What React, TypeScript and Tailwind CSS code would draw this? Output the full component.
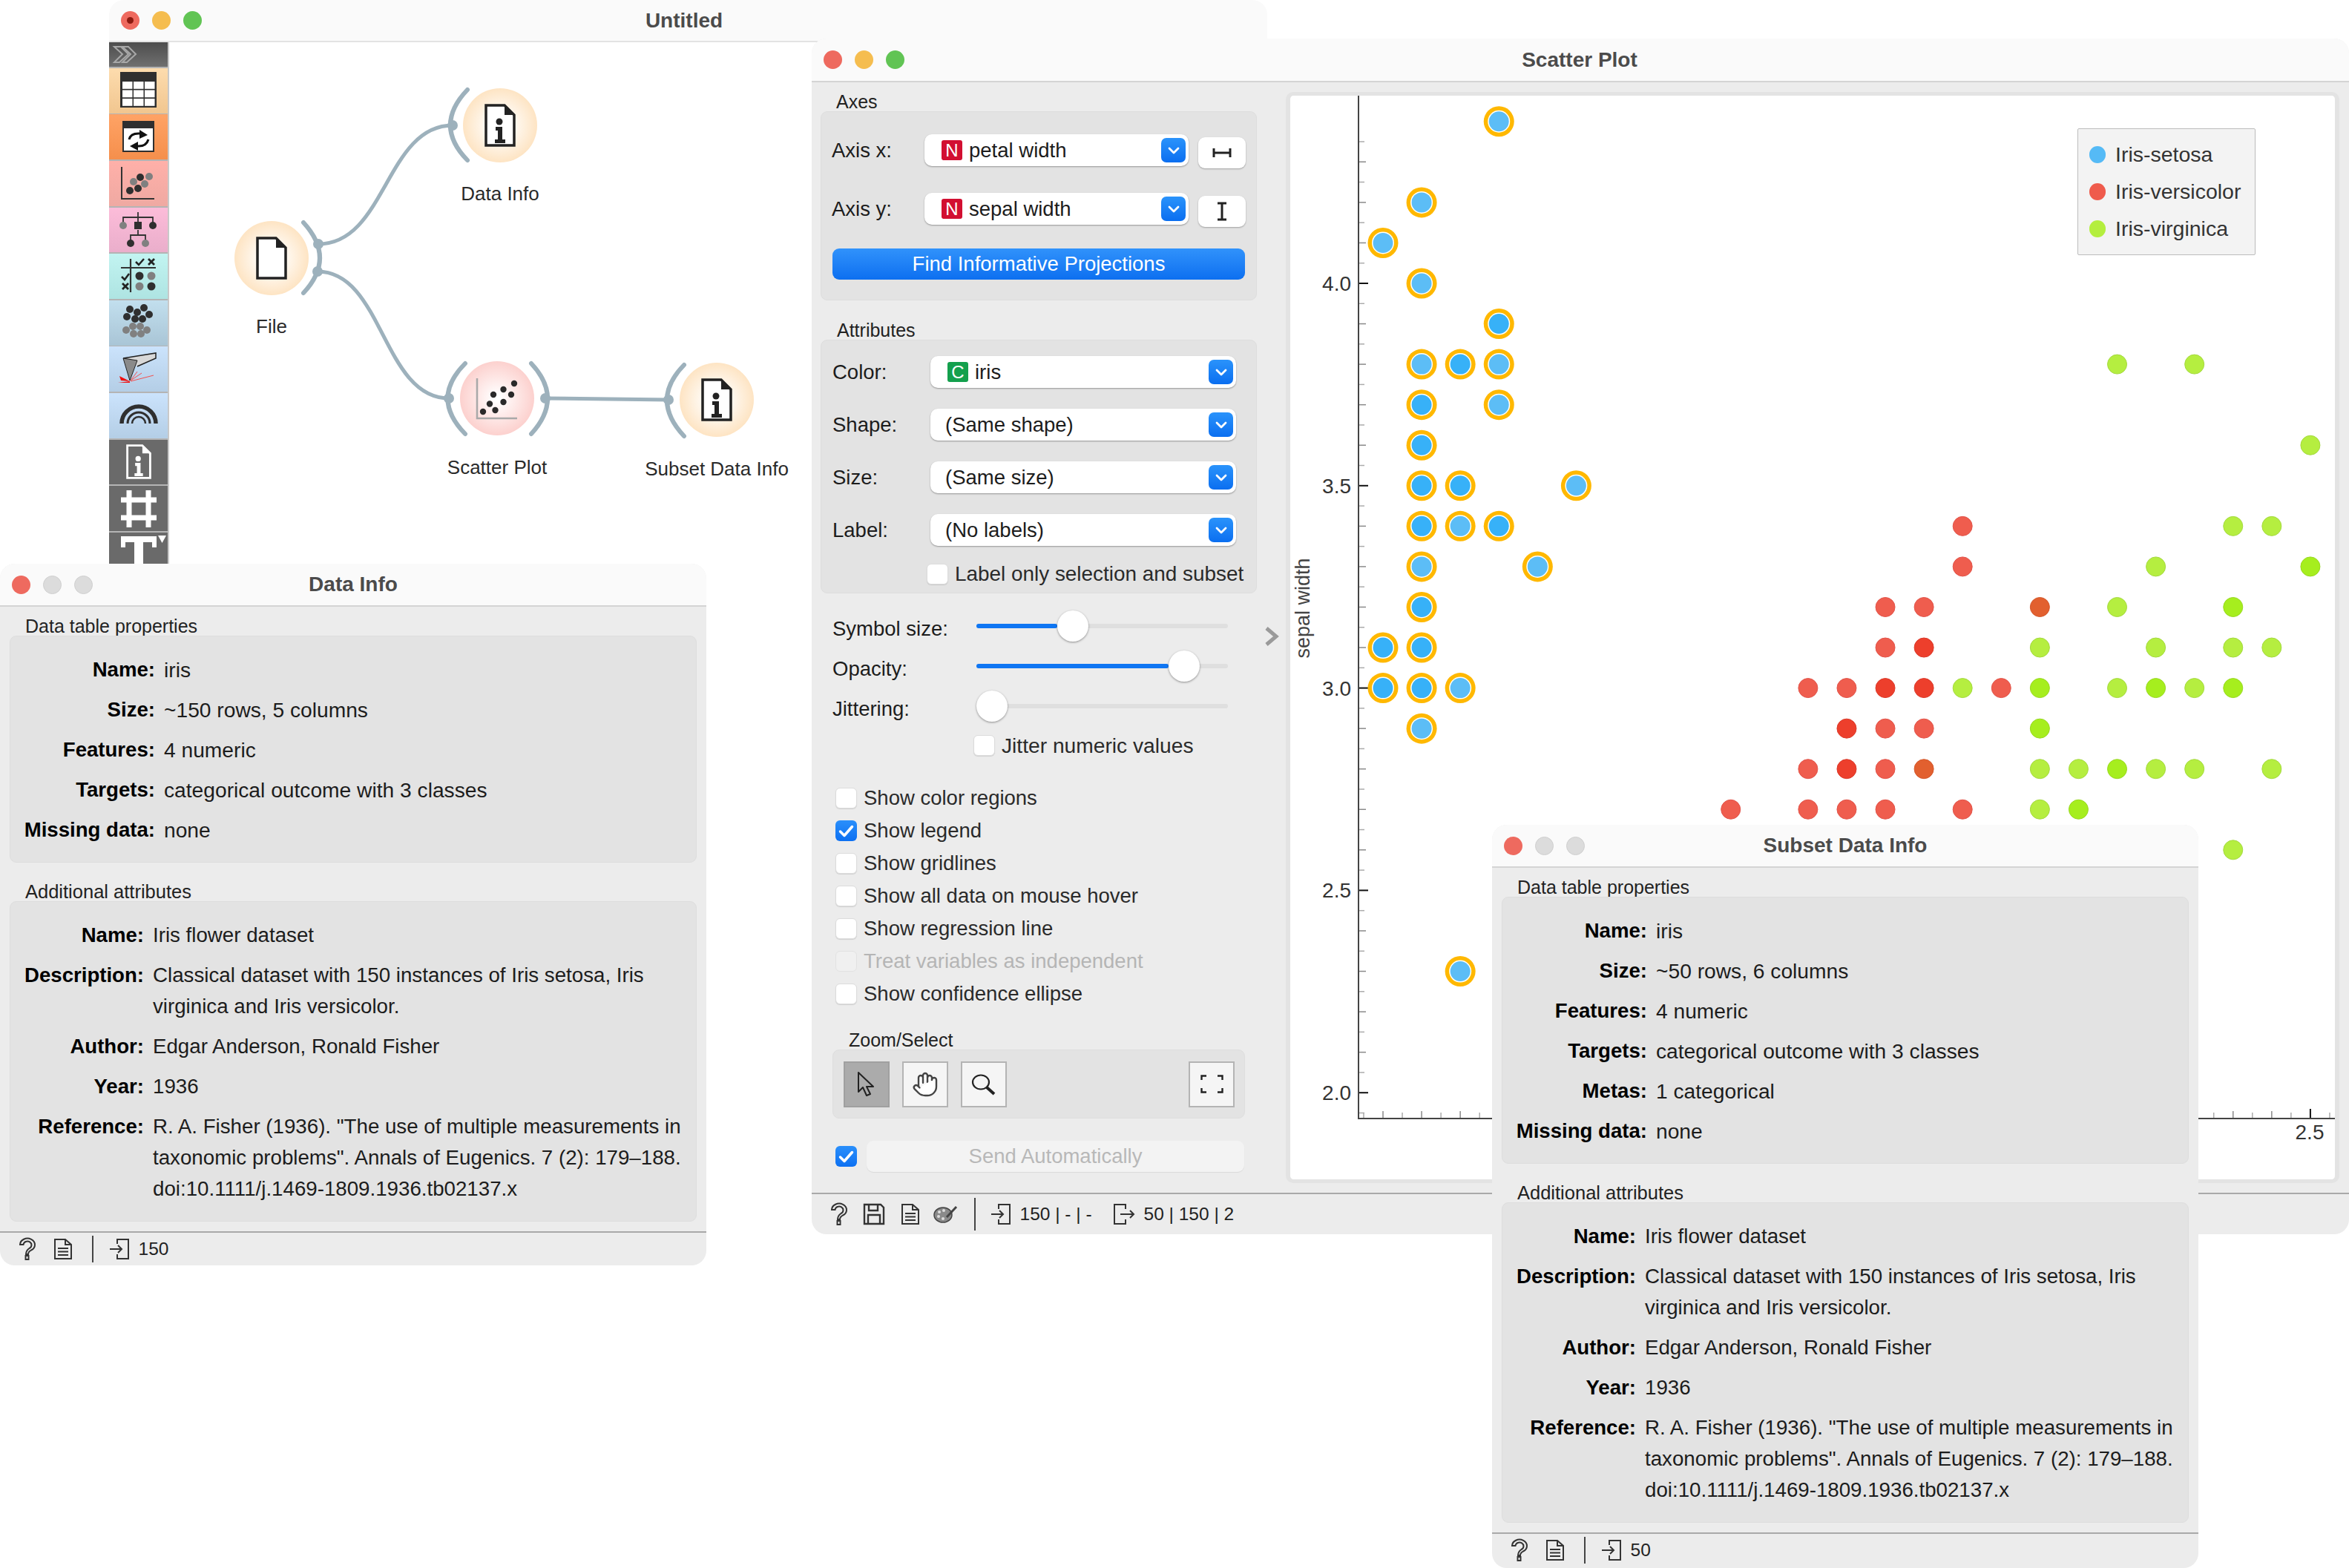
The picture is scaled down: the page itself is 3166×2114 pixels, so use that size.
import React from "react";
import { Hand } from "lucide-react";

const FONT = "font-['Liberation_Sans',Arial,sans-serif]";

function Lights({ active, dot }: { active?: boolean; dot?: boolean }) {
  return (
    <div className="flex items-center gap-[17px]">
      <div className="w-[25px] h-[25px] rounded-full bg-[#ee6a5f] flex items-center justify-center">
        {dot && <div className="w-[9px] h-[9px] rounded-full bg-[#8c1a10]" />}
      </div>
      <div className={active ? "w-[25px] h-[25px] rounded-full bg-[#f5bd4f]" : "w-[25px] h-[25px] rounded-full bg-[#dcdcdc] border border-[#cfcfcf]"} />
      <div className={active ? "w-[25px] h-[25px] rounded-full bg-[#61c454]" : "w-[25px] h-[25px] rounded-full bg-[#dcdcdc] border border-[#cfcfcf]"} />
    </div>
  );
}

function TitleBar({ title, active, titleOffset, h = "h-[58px]" }: { title: string; active?: boolean; titleOffset?: string; h?: string }) {
  return (
    <div className={`relative ${h} shrink-0 bg-[#fafafa] border-b-2 border-[#d4d4d4] flex items-center pl-[16px]`}>
      <Lights active={active} />
      <div className={`absolute top-0 h-full flex items-center text-[28px] font-bold text-[#4b4b4b] ${titleOffset ?? "inset-x-0 justify-center"}`}>{title}</div>
    </div>
  );
}

/* ---- small icons ---- */
function DocInfo({ dark = true, w = 42, h = 58 }: { dark?: boolean; w?: number; h?: number }) {
  const c = dark ? "#222" : "#fff";
  return (
    <svg width={w} height={h} viewBox="0 0 42 58">
      <path d="M2 2H27L40 15V56H2Z" fill={dark ? "#fff" : "none"} stroke={c} strokeWidth="3.500" />
      <path d="M27 2L40 15H27Z" fill={c} />
      <circle cx="20" cy="24" r="4.500" fill={c} />
      <path d="M15 31H24V48H28V53H14V48H18V36H15Z" fill={c} />
    </svg>
  );
}
function HelpI() {
  return (
    <svg width="26" height="32" viewBox="0 0 26 32" fill="none" stroke="#333" strokeWidth="2">
      <path d="M3 10a10 8.500 0 1 1 15 7.500c-3 1.700-4 3-4 5.500h-3c0-4 1.500-6 4.500-8a5.500 5 0 1 0-8-5z" />
      <rect x="10.500" y="25" width="4" height="5" />
    </svg>
  );
}
function SaveI() {
  return (
    <svg width="30" height="30" viewBox="0 0 30 30" fill="none" stroke="#333" strokeWidth="2.400">
      <path d="M2 2H24L28 6V28H2Z" /><path d="M8 2V10H20V2" /><path d="M7 28V16H23V28" />
    </svg>
  );
}
function DocI() {
  return (
    <svg width="26" height="30" viewBox="0 0 26 30" fill="none" stroke="#333" strokeWidth="2">
      <path d="M2 2H16L24 9V28H2Z" /><path d="M16 2V9H24" /><path d="M6 14H20M6 18.500H20M6 23H20" />
    </svg>
  );
}
function PaletteI() {
  return (
    <svg width="34" height="28" viewBox="0 0 34 28">
      <ellipse cx="13" cy="15" rx="12" ry="10" fill="#8a8a8a" stroke="#444" strokeWidth="1.500" />
      <circle cx="8" cy="11" r="2" fill="#ddd" /><circle cx="14" cy="9" r="2" fill="#ddd" /><circle cx="7" cy="17" r="2" fill="#ddd" /><circle cx="13" cy="20" r="2" fill="#ddd" />
      <path d="M18 18L31 4" stroke="#444" strokeWidth="3" />
    </svg>
  );
}
function InI() {
  return (
    <svg width="28" height="30" viewBox="0 0 28 30" fill="none" stroke="#333" strokeWidth="2">
      <path d="M11 8V2H26V28H11V22" /><path d="M1 15H17" /><path d="M12 10L17 15L12 20" />
    </svg>
  );
}
function OutI() {
  return (
    <svg width="30" height="30" viewBox="0 0 30 30" fill="none" stroke="#333" strokeWidth="2">
      <path d="M17 8V2H2V28H17V22" /><path d="M10 15H28" /><path d="M23 10L28 15L23 20" />
    </svg>
  );
}

function Chevron() {
  return (
    <svg width="18" height="12" viewBox="0 0 18 12" fill="none" stroke="#fff" strokeWidth="2.800" strokeLinecap="round" strokeLinejoin="round">
      <path d="M3 3L9 9L15 3" />
    </svg>
  );
}

function Combo({ w, badge, color, text, pl }: { w: string; badge?: string; color?: string; text: string; pl: string }) {
  return (
    <div className={`${w} h-[43px] relative rounded-[10px] bg-white shadow-[0_1px_2px_rgba(0,0,0,0.35)] flex items-center ${pl}`}>
      {badge && (
        <div className={`w-[28px] h-[27px] mr-[9px] rounded-[3px] flex items-center justify-center text-white text-[24px] leading-none ${color}`}>{badge}</div>
      )}
      <span className="text-[27.500px] text-[#1c1c1c]">{text}</span>
      <div className="absolute right-[4px] top-[5px] w-[33px] h-[33px] rounded-[7px] bg-gradient-to-b from-[#2a93fb] to-[#0a6ef0] flex items-center justify-center">
        <Chevron />
      </div>
    </div>
  );
}

function Check({ checked, disabled }: { checked?: boolean; disabled?: boolean }) {
  if (checked)
    return (
      <div className="w-[29px] h-[28px] shrink-0 rounded-[6px] bg-gradient-to-b from-[#2a8ffb] to-[#0c70f2] flex items-center justify-center">
        <svg width="21" height="17" viewBox="0 0 21 17" fill="none" stroke="#fff" strokeWidth="3.500" strokeLinecap="round" strokeLinejoin="round">
          <path d="M2.500 9L8 14.500L18.500 2.500" />
        </svg>
      </div>
    );
  return <div className={disabled ? "w-[29px] h-[28px] shrink-0 rounded-[6px] bg-[#f0f0f0] border border-[#e2e2e2]" : "w-[29px] h-[28px] shrink-0 rounded-[6px] bg-white border border-[#dcdcdc] shadow-[0_1px_1px_rgba(0,0,0,0.12)]"} />;
}

function CheckRow({ label, checked, disabled, size = "text-[27.500px]" }: { label: string; checked?: boolean; disabled?: boolean; size?: string }) {
  return (
    <div className="flex items-center h-[28px] gap-[9px]">
      <Check checked={checked} disabled={disabled} />
      <span className={disabled ? `${size} text-[#b5b5b5] whitespace-nowrap` : `${size} text-[#2a2a2a] whitespace-nowrap`}>{label}</span>
    </div>
  );
}

function Slider({ label, pct, thumbX }: { label: string; pct: string; thumbX: string }) {
  return (
    <div className="flex items-start h-[42px]">
      <div className="w-[194px] text-[27.500px] leading-[42px] pt-[4px] text-[#1c1c1c]">{label}</div>
      <div className="relative w-[339px] h-[42px]">
        <div className="absolute left-0 right-0 top-[18px] h-[6px] rounded-full bg-[#dfdfdf]" />
        <div className={`absolute left-0 top-[18px] h-[6px] rounded-full bg-[#0f76f3] ${pct}`} />
        <div className={`absolute top-0 w-[42px] h-[42px] rounded-full bg-white shadow-[0_1px_3px_rgba(0,0,0,0.4)] ${thumbX}`} />
      </div>
    </div>
  );
}

function Section({ label, x, top, children }: { label: string; x: string; top: string; children: React.ReactNode }) {
  return (
    <>
      <div className={`h-[26px] leading-[26px] text-[25px] text-[#222] whitespace-nowrap ${x} ${top}`}>{label}</div>
      {children}
    </>
  );
}

function ZBtn({ active, children }: { active?: boolean; children: React.ReactNode }) {
  return (
    <div className={active ? "w-[62px] h-[62px] bg-[#ababab] border-2 border-[#a0a0a0] flex items-center justify-center" : "w-[62px] h-[62px] bg-[#f5f5f5] border-2 border-[#b4b4b4] flex items-center justify-center"}>
      {children}
    </div>
  );
}

/* ---- toolbox ---- */
const D = "#2f2f2f";
const G = "#808080";
function Tile({ bg, children, h = "h-[60.800px]" }: { bg: string; children?: React.ReactNode; h?: string }) {
  return (
    <div className={`${h} shrink-0 overflow-hidden ${bg}`}>
      <svg width="80" height="61" viewBox="0 0 80 61">{children}</svg>
    </div>
  );
}
function Toolbox() {
  const table = (
    <>
      <rect x="15" y="5" width="49" height="48" fill={D} />
      {[0, 1, 2].map((c) => [0, 1, 2].map((r) => <rect key={`${c}${r}`} x={18 + c * 15} y={18 + r * 11.5} width="13.500" height="9.800" fill="#fff" />))}
    </>
  );
  return (
    <div className="w-[81px] shrink-0 h-full flex flex-col gap-[1.800px] bg-[#b4b4b4] overflow-hidden border-r-2 border-[#c9c9c9]">
      <div className="h-[33px] shrink-0 bg-gradient-to-b from-[#4d4d4d] to-[#707070]">
        <svg width="80" height="33" viewBox="0 0 80 33" fill="none" stroke="#a8a8a8" strokeWidth="2">
          <path d="M7 6H16L26 16L14 27H7L18 16Z" /><path d="M18 6H26L36 16L24 27H18L29 16Z" />
        </svg>
      </div>
      <Tile bg="bg-gradient-to-b from-[#fddcae] to-[#f1c68f]">{table}</Tile>
      <Tile bg="bg-gradient-to-b from-[#ffa365] to-[#f58f4c]">
        <rect x="19" y="10" width="41" height="40" fill="#fff" stroke={D} strokeWidth="2" />
        <rect x="19" y="10" width="41" height="9" fill={D} />
        <path d="M27 34Q29 25 42 26" fill="none" stroke="#111" strokeWidth="3" />
        <path d="M41 21L52 28L41 33Z" fill="#111" />
        <path d="M53 34Q50 44 38 43" fill="none" stroke="#111" strokeWidth="3" />
        <path d="M39 37L28 43L39 49Z" fill="#111" />
      </Tile>
      <Tile bg="bg-gradient-to-b from-[#ffb0a9] to-[#efa9a2]">
        <path d="M17 8V51H61" fill="none" stroke="#333" strokeWidth="2" />
        <circle cx="33" cy="28" r="5" fill={G} /><circle cx="48" cy="31" r="5" fill={G} /><circle cx="54" cy="21" r="5" fill={G} />
        <circle cx="28" cy="40" r="5" fill={D} /><circle cx="39" cy="37" r="5" fill={D} /><circle cx="42" cy="22" r="5" fill={D} />
      </Tile>
      <Tile bg="bg-gradient-to-b from-[#fcbcd9] to-[#eaaecb]">
        <path d="M39 6V24M19 21V13H59V21M39 30V38M29 46V37H49V46" fill="none" stroke="#333" strokeWidth="1.800" />
        <circle cx="19" cy="24" r="5" fill={G} /><circle cx="59" cy="24" r="5" fill={D} />
        <rect x="34" y="19" width="10" height="10" fill={D} />
        <circle cx="29" cy="48" r="5" fill={D} /><circle cx="49" cy="48" r="5" fill={G} />
      </Tile>
      <Tile bg="bg-gradient-to-b from-[#c2f4f1] to-[#aee4e2]">
        <path d="M29 7V52M16 19H63" fill="none" stroke="#333" strokeWidth="2.200" />
        <path d="M36 11L40 15L47 7" fill="none" stroke="#222" strokeWidth="2.500" />
        <path d="M53 7L61 15M61 7L53 15" fill="none" stroke="#222" strokeWidth="2.800" />
        <path d="M17 31L21 35L27 27" fill="none" stroke="#222" strokeWidth="2.500" />
        <path d="M18 40L26 48M26 40L18 48" fill="none" stroke="#222" strokeWidth="2.800" />
        <circle cx="41" cy="30" r="5.500" fill={D} /><circle cx="57" cy="30" r="5.500" fill={G} />
        <circle cx="41" cy="44" r="5.500" fill={G} /><circle cx="57" cy="44" r="5.500" fill={D} />
      </Tile>
      <Tile bg="bg-gradient-to-b from-[#c2dfee] to-[#a9c5d6]">
        {[[28, 12], [47, 10], [38, 16], [54, 19], [24, 22], [35, 25], [45, 25]].map(([x, y], i) => <circle key={i} cx={x} cy={y} r="5" fill={D} />)}
        {[[32, 35], [42, 35], [23, 40], [51, 40], [33, 45], [43, 45]].map(([x, y], i) => <circle key={i} cx={x} cy={y} r="5" fill={G} />)}
      </Tile>
      <Tile bg="bg-gradient-to-b from-[#cbe3fc] to-[#b4cee6]">
        <path d="M19 16L63 9V16L38 27" fill="#d8d8d8" stroke="#222" strokeWidth="1.500" />
        <path d="M19 16L38 19L28 46Z" fill="#8a8a8a" stroke="#222" strokeWidth="1" />
        <path d="M28 47L14 40L16 46Z M28 47L12 49L28 49Z" fill="#f01010" />
        <path d="M29 46L44 36M29 47L60 39M29 46L38 34" stroke="#f25050" strokeWidth="1" />
      </Tile>
      <Tile bg="bg-gradient-to-b from-[#cbe3fc] to-[#b4cee6]">
        <path d="M17 41A23 23 0 0 1 63 41" fill="none" stroke={D} strokeWidth="5.500" />
        <path d="M25 41A15 15 0 0 1 55 41" fill="none" stroke={D} strokeWidth="3" />
        <path d="M31 41A9 9 0 0 1 49 41" fill="none" stroke={D} strokeWidth="2.500" />
      </Tile>
      <Tile bg="bg-[#6a6a6a]">
        <g transform="translate(23,6)"><DocInfo dark={false} w={34} h={47} /></g>
      </Tile>
      <Tile bg="bg-[#6a6a6a]">
        <path d="M27 6V56M53 6V56M16 19H64M16 43H64" fill="none" stroke="#fff" strokeWidth="7" />
      </Tile>
      <Tile bg="bg-[#6a6a6a]" h="h-[42px]">
        <path d="M16 5H64V20H58V13H46V42H34V13H22V20H16Z" fill="#fff" />
        <path d="M66 4H77L71.500 14Z" fill="#fff" />
      </Tile>
    </div>
  );
}

/* ---- canvas node ---- */
function Node({ cx, cy, tone, label, labelY, children }: { cx: string; cy: string; tone: "o" | "p"; label: string; labelY: string; children: React.ReactNode }) {
  return (
    <>
      <div className={`absolute w-[100px] h-[100px] -translate-x-1/2 -translate-y-1/2 rounded-full flex items-center justify-center ${cx} ${cy} ${tone === "o" ? "bg-[radial-gradient(circle,#fff_15%,#fdd6a4_100%)]" : "bg-[radial-gradient(circle,#fff_5%,#fbbcb8_100%)]"}`}>
        {children}
      </div>
      <div className={`absolute -translate-x-1/2 -translate-y-1/2 text-[26px] text-[#2a2a2a] whitespace-nowrap ${cx} ${labelY}`}>{label}</div>
    </>
  );
}

function Canvas() {
  const s = "#9db1bc";
  const arc = (d: string) => <path d={d} fill="none" stroke={s} strokeWidth="6" strokeLinecap="round" />;
  const dot = (x: number, y: number) => <circle cx={x} cy={y} r="7" fill={s} />;
  return (
    <div className="relative flex-1 h-[900px] bg-white">
      <svg className="absolute left-0 top-0" width="1480" height="843" viewBox="228 57 1480 843">
        <path d="M429 329C520 329 520 169 610 169" fill="none" stroke={s} strokeWidth="5" />
        <path d="M428 366C516 366 516 537 605 537" fill="none" stroke={s} strokeWidth="5" />
        <path d="M735 537L901 539" fill="none" stroke={s} strokeWidth="5" />
        {arc("M630 121Q584 169 630 216")}
        {arc("M409 300Q453 348 409 395")}
        {arc("M627 490Q580 537 627 585")}
        {arc("M716 490Q760 537 716 585")}
        {arc("M922 492Q876 539 922 588")}
        {dot(610, 169)}{dot(429, 329)}{dot(428, 366)}{dot(605, 537)}{dot(735, 537)}{dot(901, 539)}
      </svg>
      <Node cx="left-[138px]" cy="top-[291px]" tone="o" label="File" labelY="top-[383px]">
        <svg width="42" height="58" viewBox="0 0 42 58">
          <path d="M2 2H27L40 15V56H2Z" fill="#fff" stroke="#222" strokeWidth="3.500" />
          <path d="M27 2L40 15H27Z" fill="#222" />
        </svg>
      </Node>
      <Node cx="left-[446px]" cy="top-[112px]" tone="o" label="Data Info" labelY="top-[204px]"><DocInfo /></Node>
      <Node cx="left-[442px]" cy="top-[480px]" tone="p" label="Scatter Plot" labelY="top-[573px]">
        <svg width="60" height="62" viewBox="0 0 60 62">
          <path d="M3 4V58H57" fill="none" stroke="#a9a9a9" strokeWidth="2.500" />
          {[[11, 49], [27.500, 47], [20, 38.500], [38.500, 36], [25, 26], [49, 26], [38.500, 19], [53, 11]].map(([x, y], i) => <circle key={i} cx={x} cy={y} r="4.200" fill="#2a2a2a" />)}
        </svg>
      </Node>
      <Node cx="left-[738px]" cy="top-[482px]" tone="o" label="Subset Data Info" labelY="top-[575px]"><DocInfo /></Node>
    </div>
  );
}

/* ---- info window ---- */
type Row = { k: string; v: React.ReactNode };
function InfoBox({ rows, w, size }: { rows: Row[]; w: string; size: string }) {
  return (
    <div className="mx-[13px] rounded-[9px] bg-[#e3e3e3] border border-[#dddddd] pt-[24px] pb-[22px] flex flex-col gap-[12px]">
      {rows.map((r) => (
        <div key={r.k} className={`flex gap-[12px] leading-[42px] text-[#1c1c1c] whitespace-nowrap ${size}`}>
          <div className={`${w} text-right font-bold text-black text-[27.600px]`}>{r.k}</div>
          <div>{r.v}</div>
        </div>
      ))}
    </div>
  );
}
function InfoWindow({ title, pos, rows, extra, count }: { title: string; pos: string; rows: Row[]; extra: Row[]; count: string }) {
  return (
    <div className={`absolute w-[952px] rounded-[20px] overflow-hidden bg-[#ececec] flex flex-col ${pos}`}>
      <TitleBar title={title} />
      <div className="h-[26px] mt-[13px] pl-[34px] text-[25px] leading-[26px] text-[#222]">Data table properties</div>
      <InfoBox rows={rows} w="w-[195px]" size="text-[28.200px]" />
      <div className="h-[26px] mt-[26px] pl-[34px] text-[25.500px] leading-[26px] text-[#222]">Additional attributes</div>
      <InfoBox rows={extra} w="w-[180px]" size="text-[27.700px]" />
      <div className="mt-[13px] h-[46px] border-t-2 border-[#a9a9a9] flex items-center pl-[24px] shrink-0">
        <HelpI />
        <div className="ml-[22px]"><DocI /></div>
        <div className="ml-[26px] w-[1.500px] h-[36px] bg-[#444]" />
        <div className="ml-[21px]"><InI /></div>
        <span className="ml-[12px] text-[24.500px] text-[#222]">{count}</span>
      </div>
    </div>
  );
}

const extra: Row[] = [
  { k: "Name:", v: "Iris flower dataset" },
  { k: "Description:", v: <>Classical dataset with 150 instances of Iris setosa, Iris<br />virginica and Iris versicolor.</> },
  { k: "Author:", v: "Edgar Anderson, Ronald Fisher" },
  { k: "Year:", v: "1936" },
  { k: "Reference:", v: <>R. A. Fisher (1936). "The use of multiple measurements in<br />taxonomic problems". Annals of Eugenics. 7 (2): 179–188.<br />doi:10.1111/j.1469-1809.1936.tb02137.x</> },
];

/* ---- chart ---- */
const X = (v: number) => 1864 + (v - 0.1) * 520.8 - 1739;
const Y = (v: number) => 382 + (4 - v) * 545.6 - 129;
const setosa: [number, number, number][] = [
  [0.4, 4.4, 0], [0.2, 4.2, 0], [0.1, 4.1, 0], [0.2, 4.0, 0], [0.4, 3.9, 1], [0.2, 3.8, 0], [0.3, 3.8, 1], [0.4, 3.8, 0], [0.2, 3.7, 1], [0.4, 3.7, 0],
  [0.2, 3.6, 1], [0.2, 3.5, 1], [0.3, 3.5, 1], [0.6, 3.5, 0], [0.2, 3.4, 1], [0.3, 3.4, 0], [0.4, 3.4, 1], [0.2, 3.3, 0], [0.5, 3.3, 0], [0.2, 3.2, 1],
  [0.1, 3.1, 1], [0.2, 3.1, 1], [0.1, 3.0, 1], [0.2, 3.0, 1], [0.3, 3.0, 0], [0.2, 2.9, 0], [0.3, 2.3, 0],
];
const colors: Record<string, [string, string]> = {
  r: ["#ef5d4e", "#e2544a"],
  R: ["#ed3f2c", "#db3a2a"],
  o: ["#e2602f", "#d4572a"],
  g: ["#b5ee40", "#a4d93f"],
  G: ["#a6ee1e", "#97d81e"],
};
const others: [number, number, string][] = [
  [2.0, 3.8, "g"], [2.2, 3.8, "g"], [2.5, 3.6, "g"],
  [1.6, 3.4, "r"], [2.3, 3.4, "g"], [2.4, 3.4, "g"],
  [1.6, 3.3, "r"], [2.1, 3.3, "g"], [2.5, 3.3, "G"],
  [1.4, 3.2, "r"], [1.5, 3.2, "r"], [1.8, 3.2, "o"], [2.0, 3.2, "g"], [2.3, 3.2, "G"],
  [1.4, 3.1, "r"], [1.5, 3.1, "R"], [1.8, 3.1, "g"], [2.1, 3.1, "g"], [2.3, 3.1, "g"], [2.4, 3.1, "g"],
  [1.2, 3.0, "r"], [1.3, 3.0, "r"], [1.4, 3.0, "R"], [1.5, 3.0, "R"], [1.6, 3.0, "g"], [1.7, 3.0, "r"], [1.8, 3.0, "G"], [2.0, 3.0, "g"], [2.1, 3.0, "G"], [2.2, 3.0, "g"], [2.3, 3.0, "G"],
  [1.3, 2.9, "R"], [1.4, 2.9, "r"], [1.5, 2.9, "r"], [1.8, 2.9, "G"],
  [1.2, 2.8, "r"], [1.3, 2.8, "R"], [1.4, 2.8, "r"], [1.5, 2.8, "o"], [1.8, 2.8, "g"], [1.9, 2.8, "g"], [2.0, 2.8, "G"], [2.1, 2.8, "g"], [2.2, 2.8, "g"], [2.4, 2.8, "g"],
  [1.0, 2.7, "r"], [1.2, 2.7, "r"], [1.3, 2.7, "r"], [1.4, 2.7, "r"], [1.6, 2.7, "r"], [1.8, 2.7, "g"], [1.9, 2.7, "G"],
  [2.3, 2.6, "g"],
];

function Chart() {
  const yt: number[] = [];
  for (let i = 0; i <= 48; i++) yt.push(+(1.95 + i * 0.05).toFixed(2));
  const xt: number[] = [];
  for (let i = 1; i <= 51; i++) xt.push(+(i * 0.05).toFixed(2));
  const tickStyle = (n: number) => {
    const m = Math.round(n * 100);
    if (m % 50 === 0) return { c: "#111", l: 13, w: 2 };
    if (m % 10 === 0) return { c: "#8a8a8a", l: 10, w: 1.5 };
    return { c: "#ababab", l: 8, w: 1.5 };
  };
  const ax = 1831 - 1739;
  const ay = 1508 - 129;
  return (
    <svg className="absolute left-0 top-0" width="1408" height="1460" viewBox="0 0 1408 1460">
      {yt.map((v) => {
        const t = tickStyle(v);
        return <line key={v} x1={ax} x2={ax + t.l} y1={Y(v)} y2={Y(v)} stroke={t.c} strokeWidth={t.w} />;
      })}
      {xt.map((v) => {
        const t = tickStyle(v);
        return <line key={v} x1={X(v)} x2={X(v)} y1={ay} y2={ay - t.l} stroke={t.c} strokeWidth={t.w} />;
      })}
      <line x1={ax} x2={ax} y1="0" y2={ay + 1} stroke="#444" strokeWidth="2" />
      <line x1={ax - 1} x2="1408" y1={ay} y2={ay} stroke="#444" strokeWidth="2" />
      {[4, 3.5, 3, 2.5, 2].map((v) => (
        <text key={v} x={1821 - 1739} y={Y(v) + 10} textAnchor="end" fontSize="28" fill="#333" fontFamily="Liberation Sans, Arial, sans-serif">{v.toFixed(1)}</text>
      ))}
      <text x={3113 - 1739} y={1536 - 129} textAnchor="middle" fontSize="28" fill="#333" fontFamily="Liberation Sans, Arial, sans-serif">2.5</text>
      <text transform={`translate(${1765 - 1739},${820 - 129}) rotate(-90)`} textAnchor="middle" fontSize="27" fill="#444" fontFamily="Liberation Sans, Arial, sans-serif">sepal width</text>
      {others.map(([x, y, c], i) => (
        <circle key={i} cx={X(x)} cy={Y(y)} r="13" fill={colors[c][0]} stroke={colors[c][1]} strokeWidth="1" />
      ))}
      {setosa.map(([x, y, d], i) => (
        <g key={i}>
          <circle cx={X(x)} cy={Y(y)} r="20.500" fill="#ffb800" />
          <circle cx={X(x)} cy={Y(y)} r="15" fill="#fff" />
          <circle cx={X(x)} cy={Y(y)} r="13.500" fill={d ? "#37b1f8" : "#5cbdf6"} />
        </g>
      ))}
    </svg>
  );
}

function Legend() {
  const items: [string, string][] = [["Iris-setosa", "bg-[#55baf6]"], ["Iris-versicolor", "bg-[#ef5b4c]"], ["Iris-virginica", "bg-[#b4ee3e]"]];
  return (
    <div className="absolute left-[1061px] top-[44px] w-[240px] h-[171px] bg-[#f3f3f3] border border-[#bcbcbc] rounded-[2px] flex flex-col justify-center gap-[22px] pl-[15px]">
      {items.map(([t, c]) => (
        <div key={t} className="flex items-center h-[28px] gap-[13px] text-[28.500px] text-[#333]">
          <div className={`w-[22px] h-[23px] rounded-full ${c}`} />
          {t}
        </div>
      ))}
    </div>
  );
}

function ScatterWindow() {
  return (
    <div className="absolute left-[1094px] top-[52px] w-[2072px] h-[1612px] rounded-[20px] overflow-hidden bg-[#ececec] flex flex-col">
      <TitleBar title="Scatter Plot" active h="h-[59px]" titleOffset="left-[0px] w-[2070px] justify-center" />
      <div className="flex flex-1 min-h-0">
        <div className="w-[600px] shrink-0 flex flex-col">
          <Section label="Axes" x="pl-[33px]" top="mt-[13px]">
            <div className="ml-[12px] w-[588px] h-[255px] rounded-[9px] bg-[#e3e3e3] border border-[#dddddd] pt-[30px] pl-[14px] box-border">
              <div className="flex flex-col gap-[36px]">
                <div className="flex items-center h-[43px]">
                  <div className="w-[125px] text-[27.500px] text-[#1c1c1c]">Axis x:</div>
                  <Combo w="w-[356px]" badge="N" color="bg-[#d20f31]" text="petal width" pl="pl-[23px]" />
                  <div className="ml-[13px] mt-[6px] w-[64px] h-[42px] rounded-[9px] bg-white shadow-[0_1px_2px_rgba(0,0,0,0.3)] flex items-center justify-center">
                    <svg width="26" height="14" viewBox="0 0 26 14" fill="none" stroke="#222" strokeWidth="3"><path d="M2 1V13M24 1V13M2 7H24" /></svg>
                  </div>
                </div>
                <div className="flex items-center h-[43px]">
                  <div className="w-[125px] text-[27.500px] text-[#1c1c1c]">Axis y:</div>
                  <Combo w="w-[356px]" badge="N" color="bg-[#d20f31]" text="sepal width" pl="pl-[23px]" />
                  <div className="ml-[13px] mt-[6px] w-[64px] h-[42px] rounded-[9px] bg-white shadow-[0_1px_2px_rgba(0,0,0,0.3)] flex items-center justify-center">
                    <svg width="14" height="26" viewBox="0 0 14 26" fill="none" stroke="#222" strokeWidth="3"><path d="M1 2H13M1 24H13M7 2V24" /></svg>
                  </div>
                </div>
              </div>
              <div className="mt-[32px] ml-[1px] w-[556px] h-[42px] rounded-[9px] bg-gradient-to-b from-[#3092fb] to-[#0c6ff0] text-white text-[27.500px] flex items-center justify-center">Find Informative Projections</div>
            </div>
          </Section>
          <Section label="Attributes" x="pl-[34px]" top="mt-[27px]">
            <div className="ml-[12px] w-[588px] h-[342px] rounded-[9px] bg-[#e3e3e3] border border-[#dddddd] pt-[21px] pl-[15px] box-border flex flex-col gap-[28px]">
              {[
                { l: "Color:", t: "iris", b: "C" },
                { l: "Shape:", t: "(Same shape)" },
                { l: "Size:", t: "(Same size)" },
                { l: "Label:", t: "(No labels)" },
              ].map((r) => (
                <div key={r.l} className="flex items-center h-[43px]">
                  <div className="w-[132px] text-[27.500px] text-[#1c1c1c]">{r.l}</div>
                  <Combo w="w-[412px]" badge={r.b} color="bg-[#14a04d]" text={r.t} pl={r.b ? "pl-[23px]" : "pl-[20px]"} />
                </div>
              ))}
              <div className="ml-[127px] -mt-[4px]">
                <CheckRow label="Label only selection and subset" size="text-[27.900px]" />
              </div>
            </div>
          </Section>
          <div className="mt-[23px] pl-[28px] flex flex-col gap-[12px]">
            <Slider label="Symbol size:" pct="w-[109px]" thumbX="left-[109px]" />
            <Slider label="Opacity:" pct="w-[259px]" thumbX="left-[259px]" />
            <Slider label="Jittering:" pct="w-0" thumbX="left-0" />
          </div>
          <div className="mt-[18px] ml-[218px]"><CheckRow label="Jitter numeric values" size="text-[28.200px]" /></div>
          <div className="mt-[43px] ml-[32px] flex flex-col gap-[16px]">
            <CheckRow label="Show color regions" />
            <CheckRow label="Show legend" checked />
            <CheckRow label="Show gridlines" />
            <CheckRow label="Show all data on mouse hover" />
            <CheckRow label="Show regression line" />
            <CheckRow label="Treat variables as independent" disabled />
            <CheckRow label="Show confidence ellipse" />
          </div>
          <div className="mt-[35px] pl-[50px] h-[26px] leading-[26px] text-[25px] text-[#222]">Zoom/Select</div>
          <div className="ml-[28px] w-[556px] h-[93px] rounded-[9px] bg-[#e3e3e3] border border-[#dedede] flex items-center pl-[14px] pr-[13px] gap-[17px]">
            <ZBtn active>
              <svg width="30" height="36" viewBox="0 0 30 36" fill="none" stroke="#222" strokeWidth="2" strokeLinejoin="round">
                <path d="M4 2V28L10 22L15 33L20 31L15 21H24Z" />
              </svg>
            </ZBtn>
            <ZBtn><Hand size={36} strokeWidth={1.6} color="#444" fill="#fff" /></ZBtn>
            <ZBtn>
              <svg width="34" height="30" viewBox="0 0 34 30" fill="none" stroke="#222">
                <ellipse cx="13" cy="12" rx="11" ry="9.500" strokeWidth="2.200" />
                <path d="M21 19L31 28" strokeWidth="4" />
              </svg>
            </ZBtn>
            <div className="ml-auto">
              <ZBtn>
                <svg width="31" height="25" viewBox="0 0 31 25" fill="none" stroke="#222" strokeWidth="2.400">
                  <path d="M1.500 7V1.500H8M23 1.500H29.500V7M29.500 18V23.500H23M8 23.500H1.500V18" />
                </svg>
              </ZBtn>
            </div>
          </div>
          <div className="mt-[30px] ml-[32px] flex items-center gap-[13px] h-[42px]">
            <Check checked />
            <div className="w-[509px] h-[42px] rounded-[9px] bg-[#f3f3f3] shadow-[0_1px_1px_rgba(0,0,0,0.08)] text-[27.500px] text-[#b8b8b8] flex items-center justify-center">Send Automatically</div>
          </div>
        </div>
        <div className="w-[39px] shrink-0 pt-[733px] pl-[10px]">
          <svg width="20" height="28" viewBox="0 0 20 28" fill="none" stroke="#9a9a9a" strokeWidth="5"><path d="M3 3L16 14L3 25" /></svg>
        </div>
        <div className="mt-[13px] mb-[12px] w-[1420px] h-[1471px] rounded-[10px] bg-white border-x-[6px] border-y-[5px] border-[#e3e3e3] relative overflow-hidden shrink-0">
          <Chart />
          <Legend />
        </div>
      </div>
      <div className="h-[56px] shrink-0 border-t-2 border-[#a9a9a9] flex items-center pl-[24px] text-[24.500px] text-[#222] whitespace-nowrap">
        <HelpI />
        <div className="ml-[19px]"><SaveI /></div>
        <div className="ml-[21px]"><DocI /></div>
        <div className="ml-[18px]"><PaletteI /></div>
        <div className="ml-[21px] w-[1.500px] h-[44px] bg-[#444]" />
        <div className="ml-[20px]"><InI /></div>
        <span className="ml-[12px] w-[125px]">150 | - | -</span>
        <OutI />
        <span className="ml-[12px]">50 | 150 | 2</span>
      </div>
    </div>
  );
}

export default function App() {
  return (
    <div className={`relative w-[3166px] h-[2114px] overflow-hidden bg-white ${FONT}`}>
      <div className="absolute left-[147px] top-0 w-[1561px] h-[900px] rounded-t-[20px] overflow-hidden flex flex-col bg-white">
        <div className="relative h-[57px] shrink-0 bg-[#fafafa] border-b-2 border-[#e3e3e3] flex items-center pl-[16px]">
          <Lights active dot />
          <div className="absolute top-0 h-full left-0 w-[1550px] flex items-center justify-center text-[28px] font-bold text-[#4b4b4b]">Untitled</div>
        </div>
        <div className="flex flex-1 min-h-0">
          <div className="h-[703px]"><Toolbox /></div>
          <Canvas />
        </div>
      </div>
      <InfoWindow
        title="Data Info"
        pos="left-0 top-[760px] h-[946px]"
        count="150"
        rows={[
          { k: "Name:", v: "iris" },
          { k: "Size:", v: "~150 rows, 5 columns" },
          { k: "Features:", v: "4 numeric" },
          { k: "Targets:", v: "categorical outcome with 3 classes" },
          { k: "Missing data:", v: "none" },
        ]}
        extra={extra}
      />
      <ScatterWindow />
      <InfoWindow
        title="Subset Data Info"
        pos="left-[2011px] top-[1112px] h-[1002px]"
        count="50"
        rows={[
          { k: "Name:", v: "iris" },
          { k: "Size:", v: "~50 rows, 6 columns" },
          { k: "Features:", v: "4 numeric" },
          { k: "Targets:", v: "categorical outcome with 3 classes" },
          { k: "Metas:", v: "1 categorical" },
          { k: "Missing data:", v: "none" },
        ]}
        extra={extra}
      />
    </div>
  );
}
